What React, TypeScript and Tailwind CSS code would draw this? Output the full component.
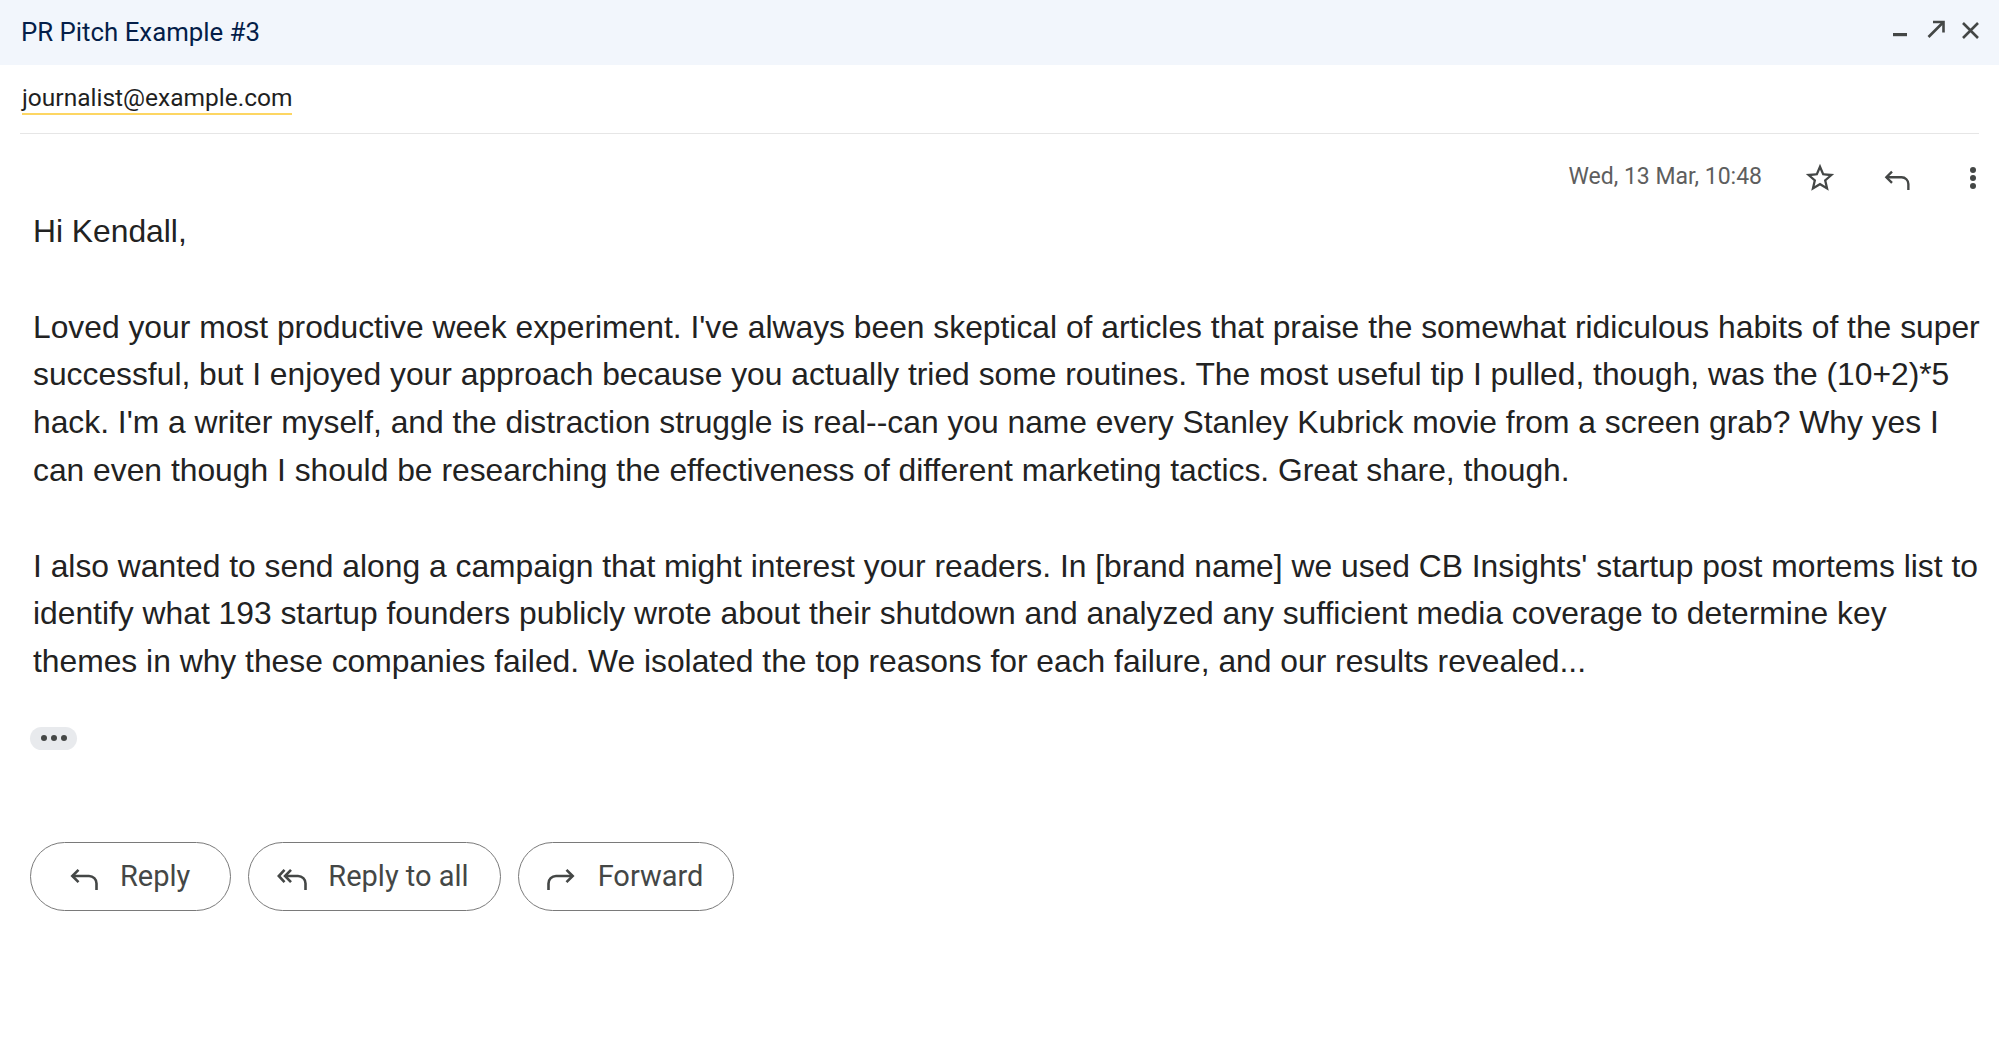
const paragraphs = [
  "Hi Kendall,",
  "Loved your most productive week experiment. I've always been skeptical of articles that praise the somewhat ridiculous habits of the super successful, but I enjoyed your approach because you actually tried some routines. The most useful tip I pulled, though, was the (10+2)*5 hack. I'm a writer myself, and the distraction struggle is real--can you name every Stanley Kubrick movie from a screen grab? Why yes I can even though I should be researching the effectiveness of different marketing tactics. Great share, though.",
  "I also wanted to send along a campaign that might interest your readers. In [brand name] we used CB Insights' startup post mortems list to identify what 193 startup founders publicly wrote about their shutdown and analyzed any sufficient media coverage to determine key themes in why these companies failed. We isolated the top reasons for each failure, and our results revealed...",
];

function ReplyIcon({ className = "" }: { className?: string }) {
  return (
    <svg viewBox="0 0 28 22" className={className} fill="none" stroke="currentColor" strokeWidth={2.6}>
      <path d="M8.5 1.8 2.3 8 8.5 14.2" />
      <path d="M2.5 8H19a7.5 7.5 0 0 1 7.5 7.5V22" />
    </svg>
  );
}

function ReplyAllIcon({ className = "" }: { className?: string }) {
  return (
    <svg viewBox="0 0 30 22" className={className} fill="none" stroke="currentColor" strokeWidth={2.6}>
      <path d="M7.5 1.8 1.8 8 7.5 14.2" />
      <path d="M14 1.8 8 8 14 14.2" />
      <path d="M8.5 8H21a7.5 7.5 0 0 1 7.5 7.5V22" />
    </svg>
  );
}

function ForwardIcon({ className = "" }: { className?: string }) {
  return (
    <svg viewBox="0 0 28 22" className={className} fill="none" stroke="currentColor" strokeWidth={2.6}>
      <path d="M19.5 1.8 25.7 8 19.5 14.2" />
      <path d="M25.5 8H9a7.5 7.5 0 0 0-7.5 7.5V22" />
    </svg>
  );
}

function ActionButton({
  icon,
  label,
  padding,
}: {
  icon: React.ReactNode;
  label: string;
  padding: string;
}) {
  return (
    <button
      className={`flex h-[69px] items-center rounded-full border-[1.5px] border-[#7a7a7a] text-[29px] text-[#444746] ${padding}`}
    >
      {icon}
      <span>{label}</span>
    </button>
  );
}

export default function App() {
  return (
    <div className="min-h-screen bg-white" style={{ fontFamily: "Roboto, 'Open Sans', sans-serif" }}>
      {/* Title bar */}
      <div className="flex h-[65px] items-start justify-between bg-[#f2f6fc] pl-[21px] pr-[20px]">
        <span className="mt-[14px] text-[25.8px] leading-[36px] text-[#041e49]">PR Pitch Example #3</span>
        <div className="flex items-start pt-[20px] text-[#444746]">
          <svg viewBox="0 0 14 4" className="mt-[13px] h-[4px] w-[14px]" fill="currentColor">
            <rect x="0" y="0" width="14" height="3.2" />
          </svg>
          <svg viewBox="0 0 18 18" className="ml-[20px] h-[18px] w-[18px]" fill="none" stroke="currentColor" strokeWidth={2.6}>
            <path d="M1.5 17 16 2.5" />
            <path d="M6 2h10.5v10.5" />
          </svg>
          <svg viewBox="0 0 17 17" className="ml-[17px] mt-[2px] h-[17px] w-[17px]" fill="none" stroke="currentColor" strokeWidth={2.6}>
            <path d="M1 1 16 16M16 1 1 16" />
          </svg>
        </div>
      </div>

      <div className="px-[20px]">
        {/* Recipient */}
        <div className="flex h-[69px] items-center border-b border-[#e6e6e6]">
          <span className="ml-[2px] border-b-2 border-[#fdd663] text-[24.5px] leading-[30px] text-[#1f1f1f]">
            journalist@example.com
          </span>
        </div>

        {/* Date + actions */}
        <div className="flex h-[72px] items-center justify-end pt-[14px] text-[#444746]">
          <span className="text-[23px] text-[#5e5e5e]">Wed, 13 Mar, 10:48</span>
          <svg viewBox="0 0 24 24" className="ml-[41px] mt-[2px] h-[34px] w-[34px]" fill="currentColor">
            <path d="M22 9.24l-7.19-.62L12 2 9.19 8.63 2 9.24l5.46 4.73L5.82 21 12 17.27 18.18 21l-1.63-7.03L22 9.24zM12 15.4l-3.76 2.27 1-4.28-3.32-2.88 4.38-.38L12 6.1l1.71 4.04 4.38.38-3.32 2.88 1 4.28L12 15.4z" />
          </svg>
          <ReplyIcon className="ml-[47px] mt-[6px] h-[20px] w-[26px]" />
          <svg viewBox="0 0 6 22" className="ml-[60px] mr-[3px] mt-[2px] h-[22px] w-[6px]" fill="currentColor">
            <circle cx="3" cy="3" r="3" />
            <circle cx="3" cy="11" r="3" />
            <circle cx="3" cy="19" r="3" />
          </svg>
        </div>

        {/* Body */}
        <div
          className="mr-[-12px] flex flex-col gap-[47.8px] pl-[13px] pt-[2px] text-[31.8px] leading-[47.8px] text-[#222222]"
          style={{ fontFamily: "'Liberation Sans', Arial, sans-serif" }}
        >
          {paragraphs.map((p, i) => (
            <p key={i}>{p}</p>
          ))}
        </div>

        {/* Trimmed content */}
        <div className="mt-[41px] ml-[10px] flex h-[23px] w-[47px] items-center justify-center gap-[4px] rounded-full bg-[#e8eaed]">
          <span className="h-[6px] w-[6px] rounded-full bg-[#444746]" />
          <span className="h-[6px] w-[6px] rounded-full bg-[#444746]" />
          <span className="h-[6px] w-[6px] rounded-full bg-[#444746]" />
        </div>

        {/* Reply buttons */}
        <div className="mt-[92px] ml-[10px] flex gap-[17px]">
          <ActionButton
            padding="pl-[39px] pr-[40px]"
            icon={<ReplyIcon className="mr-[22px] mt-[6px] h-[22px] w-[28px]" />}
            label="Reply"
          />
          <ActionButton
            padding="pl-[28px] pr-[31px]"
            icon={<ReplyAllIcon className="mr-[21px] mt-[6px] h-[22px] w-[30px]" />}
            label="Reply to all"
          />
          <ActionButton
            padding="pl-[28px] pr-[30px]"
            icon={<ForwardIcon className="mr-[23px] mt-[6px] h-[22px] w-[28px]" />}
            label="Forward"
          />
        </div>
      </div>
    </div>
  );
}
